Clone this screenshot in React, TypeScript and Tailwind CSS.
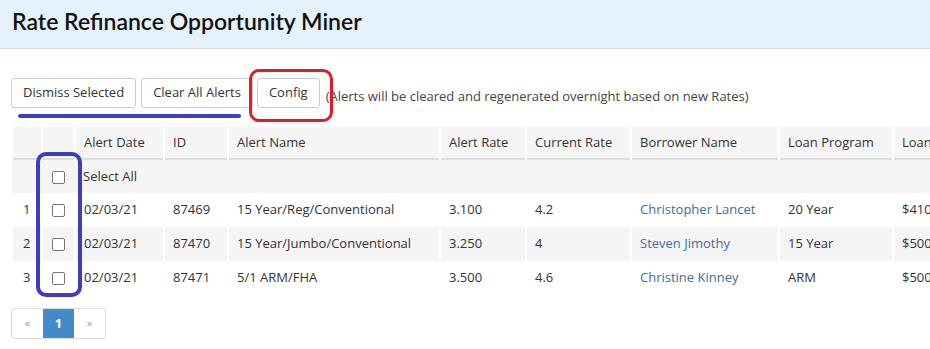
import React from 'react';

const rows = [
  { n: 1, date: '02/03/21', id: '87469', name: '15 Year/Reg/Conventional', alertRate: '3.100', currentRate: '4.2', borrower: 'Christopher Lancet', program: '20 Year', loan: '$410,000' },
  { n: 2, date: '02/03/21', id: '87470', name: '15 Year/Jumbo/Conventional', alertRate: '3.250', currentRate: '4', borrower: 'Steven Jimothy', program: '15 Year', loan: '$500,000' },
  { n: 3, date: '02/03/21', id: '87471', name: '5/1 ARM/FHA', alertRate: '3.500', currentRate: '4.6', borrower: 'Christine Kinney', program: 'ARM', loan: '$500,000' },
];

function Box() {
  return <span className="inline-block w-[13px] h-[13px] rounded-[2px] border border-[#767676] bg-white align-middle" />;
}

export default function App() {
  const th = 'h-[32px] px-[8px] text-left font-normal border-x-2 border-white';
  const td = 'h-[34px] px-[8px] border-x-2 border-white';

  return (
    <div className="w-[930px] h-[349px] overflow-hidden bg-white text-[13px] text-[#333] relative" style={{ fontFamily: '"Open Sans", "Liberation Sans", sans-serif' }}>
      {/* Page header */}
      <div className="h-[49px] bg-[#e6f2fb] border-b border-[#d5dde3] px-[12px] pt-[2px]">
        <h1 className="text-[23px] font-semibold text-[#111] leading-[38px]" style={{ fontFamily: 'Lato, sans-serif' }}>
          Rate Refinance Opportunity Miner
        </h1>
      </div>

      {/* Toolbar */}
      <div className="flex items-center pl-[11px] mt-[29px] h-[30px]">
        <button className="h-[30px] px-[11px] border border-[#ccc] rounded-[3px] bg-white text-[#333]">Dismiss Selected</button>
        <button className="h-[30px] px-[11px] ml-[5px] border border-[#ccc] rounded-[3px] bg-white text-[#333]">Clear All Alerts</button>
        <button className="h-[30px] px-[11px] ml-[4px] border border-[#ccc] rounded-[3px] bg-white text-[#333]">Config</button>
        <span className="ml-[6px] mt-[8px] text-[#444]">(Alerts will be cleared and regenerated overnight based on new Rates)</span>
      </div>

      {/* Table */}
      <div className="pl-[11px] mt-[19px]">
        <table className="border-collapse w-[1040px] table-fixed">
          <colgroup>
            <col className="w-[30px]" />
            <col className="w-[33px]" />
            <col className="w-[89px]" />
            <col className="w-[64px]" />
            <col className="w-[212px]" />
            <col className="w-[86px]" />
            <col className="w-[105px]" />
            <col className="w-[148px]" />
            <col className="w-[114px]" />
            <col className="w-[159px]" />
          </colgroup>
          <thead>
            <tr className="bg-[#f5f5f5] border-b-2 border-[#dddddd]">
              <th className={th}></th>
              <th className={th}></th>
              <th className={th}>Alert Date</th>
              <th className={th}>ID</th>
              <th className={th}>Alert Name</th>
              <th className={th}>Alert Rate</th>
              <th className={th}>Current Rate</th>
              <th className={th}>Borrower Name</th>
              <th className={th}>Loan Program</th>
              <th className={th}>Loan Amount</th>
            </tr>
          </thead>
          <tbody>
            <tr className="bg-[#f5f5f5]">
              <td className="h-[34px]"></td>
              <td className="h-[34px] text-center"><Box /></td>
              <td className="h-[34px] px-[8px]" colSpan={8}>Select All</td>
            </tr>
            {rows.map((r) => (
              <tr key={r.n} className={r.n % 2 === 0 ? 'bg-[#f5f5f5]' : 'bg-white'}>
                <td className={td + ' pl-[10px]'}>{r.n}</td>
                <td className={td + ' text-center px-0'}><Box /></td>
                <td className={td}>{r.date}</td>
                <td className={td}>{r.id}</td>
                <td className={td}>{r.name}</td>
                <td className={td}>{r.alertRate}</td>
                <td className={td}>{r.currentRate}</td>
                <td className={td}><a className="text-[#3d6e9f]">{r.borrower}</a></td>
                <td className={td}>{r.program}</td>
                <td className={td}>{r.loan}</td>
              </tr>
            ))}
          </tbody>
        </table>
      </div>

      {/* Pagination */}
      <div className="pl-[11px] mt-[13px] flex">
        <div className="flex border border-[#ddd] rounded-[3px] overflow-hidden h-[31px]">
          <span className="w-[31px] flex items-center justify-center text-[#999] text-[11px]">«</span>
          <span className="w-[31px] flex items-center justify-center bg-[#428bca] text-white font-bold">1</span>
          <span className="w-[31px] flex items-center justify-center text-[#999] text-[11px]">»</span>
        </div>
      </div>

      {/* Annotations */}
      <div className="absolute left-[18px] top-[114px] w-[223px] h-[4px] rounded-full bg-[#4040c0]" />
      <div className="absolute left-[249px] top-[69px] w-[84px] h-[53px] rounded-[10px] border-[3px] border-[#e01c26]" />
      <div className="absolute left-[36px] top-[152px] w-[46px] h-[145px] rounded-[10px] border-[4px] border-[#3d3dbd]" />
    </div>
  );
}
